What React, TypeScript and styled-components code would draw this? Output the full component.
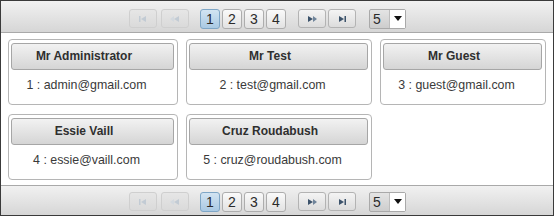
import React from "react";
import styled, { createGlobalStyle } from "styled-components";

interface IUser {
  id: number;
  name: string;
  email: string;
}

const users: IUser[] = [
  { id: 1, name: "Mr Administrator", email: "admin@gmail.com" },
  { id: 2, name: "Mr Test", email: "test@gmail.com" },
  { id: 3, name: "Mr Guest", email: "guest@gmail.com" },
  { id: 4, name: "Essie Vaill", email: "essie@vaill.com" },
  { id: 5, name: "Cruz Roudabush", email: "cruz@roudabush.com" },
];

const GlobalStyle = createGlobalStyle`
  html, body {
    margin: 0;
    padding: 0;
    background: #fff;
  }
  body {
    font-family: "Liberation Sans", Arial, sans-serif;
  }
`;

type SeekKind = "first" | "prev" | "next" | "end";

const SeekIcon: React.FC<{ kind: SeekKind; disabled?: boolean }> = ({
  kind,
  disabled,
}) => {
  const dark = disabled ? "#c2cbd4" : "#3c536b";
  const light = disabled ? "#d3d9df" : "#6f849a";
  return (
    <svg width="10" height="6" viewBox="0 0 10 6">
      {kind === "first" && (
        <>
          <rect x="1" y="0" width="1.5" height="6" fill={dark} />
          <polygon points="3,3 8,0 8,6" fill={dark} />
        </>
      )}
      {kind === "prev" && (
        <>
          <polygon points="0,3 4,0 4,6" fill={light} />
          <polygon points="4,3 9,0 9,6" fill={dark} />
        </>
      )}
      {kind === "next" && (
        <>
          <polygon points="1,0 6,3 1,6" fill={dark} />
          <polygon points="6,0 10,3 6,6" fill={light} />
        </>
      )}
      {kind === "end" && (
        <>
          <polygon points="2,0 7,3 2,6" fill={dark} />
          <rect x="7.5" y="0" width="1.5" height="6" fill={dark} />
        </>
      )}
    </svg>
  );
};

const Paginator: React.FC<{ bottom?: boolean }> = ({ bottom }) => (
  <Bar $bottom={bottom}>
    <NavButton $disabled>
      <SeekIcon kind="first" disabled />
    </NavButton>
    <NavButton $disabled $gap={4}>
      <SeekIcon kind="prev" disabled />
    </NavButton>
    <Pages>
      {[1, 2, 3, 4].map((p) => (
        <PageButton key={p} $active={p === 1}>
          {p}
        </PageButton>
      ))}
    </Pages>
    <NavButton>
      <SeekIcon kind="next" />
    </NavButton>
    <NavButton $gap={2}>
      <SeekIcon kind="end" />
    </NavButton>
    <RowsSelect>
      <SelectLabel>5</SelectLabel>
      <SelectTrigger>
        <svg width="8" height="5" viewBox="0 0 8 5">
          <polygon points="0,0 8,0 4,5" fill="#111" />
        </svg>
      </SelectTrigger>
    </RowsSelect>
  </Bar>
);

const App: React.FC = () => {
  return (
    <>
      <GlobalStyle />
      <Frame>
        <Paginator />
        <Content>
          {users.map((u) => (
            <Card key={u.id}>
              <CardTitle>{u.name}</CardTitle>
              <CardText>
                {u.id} : {u.email}
              </CardText>
            </Card>
          ))}
        </Content>
        <Paginator bottom />
      </Frame>
    </>
  );
};

const Frame = styled.div`
  width: 554px;
  height: 216px;
  box-sizing: border-box;
  border: 1px solid #3a3a3a;
  display: flex;
  flex-direction: column;
  background: #fff;
  overflow: hidden;
`;

const Bar = styled.div<{ $bottom?: boolean }>`
  height: ${(p) => (p.$bottom ? 30 : 32)}px;
  flex: none;
  display: flex;
  align-items: center;
  padding-left: 128px;
  box-sizing: border-box;
  background: linear-gradient(#f1f1f1, #d6d6d6);
  border-${(p) => (p.$bottom ? "top" : "bottom")}: 1px solid #a9a9a9;
  ${(p) => (p.$bottom ? "padding-top: 2px;" : "padding-top: 4px;")}
`;

const NavButton = styled.div<{ $disabled?: boolean; $gap?: number }>`
  width: 28px;
  height: 19px;
  box-sizing: border-box;
  margin-left: ${(p) => p.$gap ?? 0}px;
  border: 1px solid ${(p) => (p.$disabled ? "#cfcfcf" : "#b3b3b3")};
  border-radius: 3px;
  background: ${(p) =>
    p.$disabled
      ? "linear-gradient(#e6e6e6, #dadada)"
      : "linear-gradient(#f4f4f4, #dcdcdc)"};
  display: flex;
  align-items: center;
  justify-content: center;
`;

const Pages = styled.div`
  display: flex;
  gap: 2px;
  margin: 0 12px 0 11px;
`;

const PageButton = styled.div<{ $active?: boolean }>`
  width: 20px;
  height: 20px;
  box-sizing: border-box;
  border: 1px solid ${(p) => (p.$active ? "#7ea6c6" : "#adadad")};
  border-radius: 3px;
  background: ${(p) =>
    p.$active
      ? "linear-gradient(#d2e4f2, #a9c9e3)"
      : "linear-gradient(#fafafa, #e2e2e2)"};
  color: #2b2b2b;
  font-size: 14px;
  line-height: 18px;
  text-align: center;
`;

const RowsSelect = styled.div`
  margin-left: 13px;
  width: 37px;
  height: 20px;
  box-sizing: border-box;
  border: 1px solid #a9a9a9;
  border-radius: 2px;
  display: flex;
  background: linear-gradient(#e4e4e4, #cdcdcd);
`;

const SelectLabel = styled.div`
  flex: 1;
  font-size: 14px;
  line-height: 18px;
  padding-left: 3px;
  color: #2b2b2b;
`;

const SelectTrigger = styled.div`
  width: 15px;
  background: #fff;
  border-left: 1px solid #bdbdbd;
  display: flex;
  align-items: center;
  justify-content: center;
`;

const Content = styled.div`
  flex: 1;
  display: grid;
  grid-template-columns: 170px 186px 166px;
  grid-auto-rows: 66px;
  column-gap: 8px;
  row-gap: 9px;
  padding: 6px 0 0 7px;
  align-content: start;
`;

const Card = styled.div`
  box-sizing: border-box;
  border: 1px solid #b5b5b5;
  border-radius: 4px;
  padding: 3px 3px 0 2px;
`;

const CardTitle = styled.div`
  height: 27px;
  box-sizing: border-box;
  border: 1px solid #a6a6a6;
  border-radius: 3px;
  background: linear-gradient(#f2f2f2, #d5d5d5);
  color: #2f2f2f;
  font-size: 12px;
  font-weight: bold;
  line-height: 25px;
  text-align: center;
  padding-right: 17px;
`;

const CardText = styled.div`
  padding: 8px 12px 0 0;
  font-size: 12.4px;
  line-height: 14px;
  color: #3a3a3a;
  text-align: center;
`;

export default App;
